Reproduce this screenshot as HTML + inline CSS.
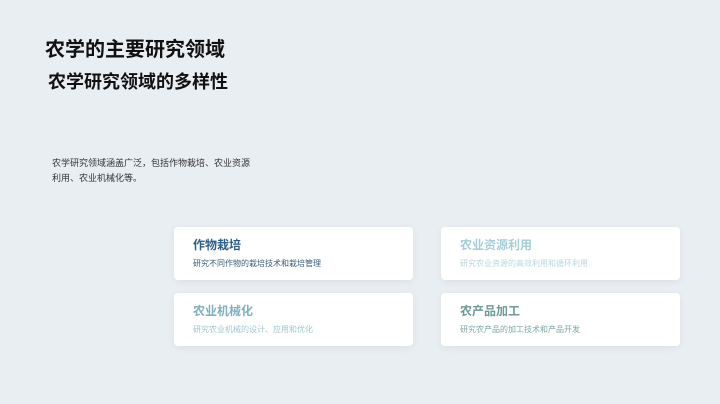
<!DOCTYPE html>
<html><head><meta charset="utf-8"><style>
*{margin:0;padding:0;box-sizing:border-box}
body{width:720px;height:404px;background:#e9eef2;font-family:"Liberation Sans","Noto Sans CJK SC",sans-serif;position:relative;overflow:hidden}
.t1{position:absolute;left:45px;top:33px;font-size:20px;font-weight:bold;color:#111;white-space:nowrap}
.t2{position:absolute;left:48px;top:68px;font-size:18px;font-weight:bold;color:#111;white-space:nowrap}
.p{position:absolute;left:52px;top:156px;width:205px;font-size:9px;line-height:15px;color:#333}
.c{position:absolute;width:239px;height:53px;background:#fff;border-radius:4px;box-shadow:0 2px 8px rgba(0,0,0,.06);padding:11px 0 0 19px}
.c h3{font-size:12px;font-weight:bold;line-height:15px}
.c p{font-size:8px;margin-top:5px}
</style></head><body>
<div class="t1">农学的主要研究领域</div>
<div class="t2">农学研究领域的多样性</div>
<div class="p">农学研究领域涵盖广泛，包括作物栽培、农业资源利用、农业机械化等。</div>
<div class="c" style="left:174px;top:227px"><h3 style="color:#2e5d88">作物栽培</h3><p style="color:#3b5b7a">研究不同作物的栽培技术和栽培管理</p></div>
<div class="c" style="left:441px;top:227px"><h3 style="color:#a6cdd5">农业资源利用</h3><p style="color:#b6d6dc">研究农业资源的高效利用和循环利用</p></div>
<div class="c" style="left:174px;top:293px"><h3 style="color:#7fb0c0">农业机械化</h3><p style="color:#a0c6d0">研究农业机械的设计、应用和优化</p></div>
<div class="c" style="left:441px;top:293px"><h3 style="color:#6e9a98">农产品加工</h3><p style="color:#7ea6a6">研究农产品的加工技术和产品开发</p></div>
</body></html>
